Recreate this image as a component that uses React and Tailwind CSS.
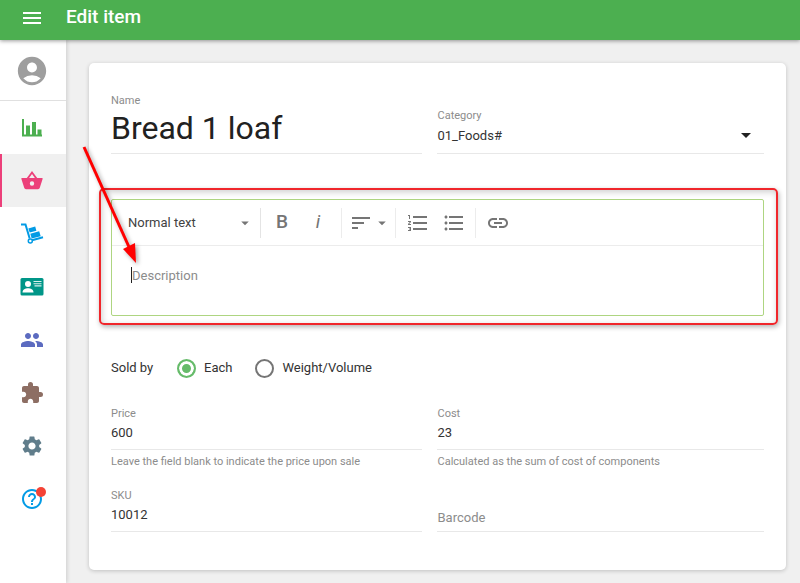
import React, { useState } from "react";
import {
  MdAccountCircle,
  MdArrowDropDown,
  MdExtension,
  MdFormatListBulleted,
  MdFormatListNumbered,
  MdHelpOutline,
  MdLink,
  MdMenu,
  MdPeople,
  MdSettings,
  MdSort,
} from "react-icons/md";

function ChartIcon() {
  return (
    <svg width="24" height="24" viewBox="0 0 24 24" fill="currentColor">
      <path d="M2 3h2v15.500h18V20.500H2z" />
      <path d="M6 9.500h4v9.500H6zM12 6h4v13h-4zM17.500 13.500h4v5.500h-4z" />
    </svg>
  );
}

function BasketIcon() {
  return (
    <svg width="24" height="24" viewBox="0 0 24 24" fill="currentColor">
      <path d="M12 2 6.800 9H2.200c-.7 0-1 .5-.8 1.100L4.200 18.800c.3.900.9 1.400 1.800 1.400h12c.9 0 1.500-.5 1.800-1.400l2.800-8.700c.2-.6-.1-1.100-.8-1.100h-4.600zm0 3 2.900 4H9.100zM12 12.300a2.200 2.200 0 1 1 0 4.400 2.200 2.200 0 0 1 0-4.400z" fillRule="evenodd" />
    </svg>
  );
}

function TrolleyIcon() {
  return (
    <svg width="24" height="24" viewBox="0 0 24 24" fill="currentColor">
      <path d="M1 2.500h4.500l4.200 14" fill="none" stroke="currentColor" strokeWidth="2" />
      <path d="m12 18.300 11-3" fill="none" stroke="currentColor" strokeWidth="2" />
      <circle cx="10.300" cy="19" r="2" fill="none" stroke="currentColor" strokeWidth="1.500" />
      <path d="m8.300 6.400 6.900-1.900 1.200 4.300-6.700 1.800zM10.300 11.700l8.900-2.400 1.500 4.900-9 2.400z" />
    </svg>
  );
}

function BadgeIcon() {
  return (
    <svg width="24" height="24" viewBox="0 0 24 24">
      <rect x="0.500" y="3" width="23" height="17.500" rx="1.500" fill="#009688" />
      <circle cx="8" cy="9" r="3" fill="#fff" />
      <path d="M2.500 17.500c0-3 3-4.200 5.500-4.200s5.500 1.200 5.500 4.200z" fill="#fff" />
      <path d="M13.500 6.500h8M13.500 8.700h8M14.500 10.900h7" stroke="#d8efec" strokeWidth="1.100" />
    </svg>
  );
}

const menu = [
  { name: "Reports", icon: <ChartIcon />, color: "text-[#4caf50]" },
  { name: "Items", icon: <BasketIcon />, color: "text-[#ec407a]", active: true },
  { name: "Inventory", icon: <TrolleyIcon />, color: "text-[#039be5]" },
  { name: "Employees", icon: <BadgeIcon />, color: "text-[#009688]" },
  { name: "Customers", icon: <MdPeople size={24} />, color: "text-[#5c6bc0]" },
  { name: "Integrations", icon: <MdExtension size={24} />, color: "text-[#8d6e63]" },
  { name: "Settings", icon: <MdSettings size={24} />, color: "text-[#607d8b]" },
  { name: "Help", icon: <MdHelpOutline size={24} />, color: "text-[#039be5]", badge: true },
];

function Sidebar() {
  return (
    <nav className="w-[66px] shrink-0 bg-white shadow-[1px_0_4px_rgba(0,0,0,0.15)]">
      <button aria-label="Account" className="flex h-[61px] w-full items-center justify-center border-b border-[#e0e0e0] pt-0.5 pr-0.5 text-[#9e9e9e]">
        <MdAccountCircle size={34} />
      </button>
      {menu.map((m) => (
        <a
          key={m.name}
          href="#"
          aria-label={m.name}
          className={`flex h-[53px] items-center justify-center border-l-2 pr-1 ${m.color} ${
            m.active ? "border-[#ec407a] bg-[#f0f0f0]" : "border-transparent"
          }`}
        >
          <span className="relative">
            {m.icon}
            {m.badge && <span className="absolute top-0 -right-0.5 size-2.5 rounded-full bg-[#f44336]" />}
          </span>
        </a>
      ))}
    </nav>
  );
}

function Field({ id, label, value, hint }) {
  const [val, setVal] = useState(value);

  return (
    <div className="min-w-0">
      <label htmlFor={id} className="block h-4 pt-px text-[11px] leading-4 text-[#8c8c8c]">
        {label}
      </label>
      <input
        id={id}
        value={val}
        onChange={(e) => setVal(e.target.value)}
        className="block h-[29px] w-full border-b border-[#e8e8e8] pb-1.5 text-[13px] text-[#333] outline-none"
      />
      {hint && <p className="pt-1 text-[11px] leading-4 text-[#8c8c8c]">{hint}</p>}
    </div>
  );
}

function Editor() {
  const [text, setText] = useState("");

  return (
    <div className="relative mt-[45px]">
      <div className="rounded-xs border border-[#aed581]">
        <div className="flex h-[46px] items-center border-b border-[#ececec] text-[#757575]">
          <div className="relative w-[149px] border-r border-[#e4e4e4]">
            <select aria-label="Text style" className="h-[30px] w-full appearance-none pl-4 text-[13px] text-[#424242] outline-none">
              <option>Normal text</option>
            </select>
            <MdArrowDropDown size={18} className="pointer-events-none absolute top-1.5 right-1.5" />
          </div>
          <div className="flex h-[30px] w-[81px] items-center border-r border-[#ececec] pl-[9px]">
            <button aria-label="Bold" className="w-6 text-[19px] font-medium">B</button>
            <button aria-label="Italic" className="ml-3 w-6 text-[19px] italic">i</button>
          </div>
          <div className="flex h-[30px] w-[54px] items-center border-r border-[#ececec] pl-[7px]">
            <button aria-label="Align" className="flex items-center">
              <MdSort size={24} />
              <MdArrowDropDown size={18} />
            </button>
          </div>
          <div className="flex h-[30px] w-20 items-center gap-3 border-r border-[#ececec] pl-2.5">
            <button aria-label="Numbered list"><MdFormatListNumbered size={24} /></button>
            <button aria-label="Bulleted list"><MdFormatListBulleted size={24} /></button>
          </div>
          <button aria-label="Link" className="ml-2.5"><MdLink size={24} /></button>
        </div>
        <div className="relative">
          <textarea
            aria-label="Description"
            placeholder="Description"
            value={text}
            onChange={(e) => setText(e.target.value)}
            className="block h-[69px] w-full resize-none px-5 pt-5 text-[13px] text-[#333] outline-none placeholder:text-[#8c8c8c]"
          />
          <span className="absolute top-[21px] left-[19px] h-4 w-px bg-[#222]" />
        </div>
      </div>

      {/* highlight */}
      <div className="pointer-events-none absolute -top-[11px] -right-[14px] -bottom-[9px] -left-[12px] rounded-[5px] border-2 border-[#f0262b] shadow-[1px_2px_5px_rgba(0,0,0,0.3),inset_1px_2px_6px_rgba(0,0,0,0.2)]" />
      <svg
        className="pointer-events-none absolute -top-[57px] -left-[31px] drop-shadow-[2px_2px_2px_rgba(0,0,0,0.35)]"
        width="64"
        height="124"
        viewBox="0 0 64 124"
      >
        <path d="M4 5 49 105" stroke="#f00" strokeWidth="3" />
        <path d="m56 121-13-14 12-6z" fill="#f00" />
      </svg>
    </div>
  );
}

function App() {
  const [name, setName] = useState("Bread 1 loaf");
  const [soldBy, setSoldBy] = useState("each");

  const radio =
    "size-[19px] appearance-none rounded-full border-2 border-[#757575] checked:border-[#66bb6a] checked:bg-[#66bb6a] checked:shadow-[inset_0_0_0_3px_#fff]";

  return (
    <div className="flex min-h-screen flex-col bg-[#f0f0f0] font-[Roboto,sans-serif]">
      <header className="z-10 flex h-10 items-center bg-[#4caf50] pl-5 text-white shadow-[0_1px_4px_rgba(0,0,0,0.4)]">
        <button aria-label="Menu" className="mt-[-5px]"><MdMenu size={24} /></button>
        <h1 className="ml-[22px] pb-1.5 text-[19px] leading-6 font-medium">Edit item</h1>
      </header>

      <div className="flex flex-1">
        <Sidebar />
        <main className="flex-1 pt-[23px] pr-[14px] pb-[13px] pl-[23px]">
          <form className="rounded-[5px] bg-white px-[22px] pt-[29px] pb-[38px] shadow-[0_1px_4px_rgba(0,0,0,0.2)]">
            <div className="grid grid-cols-[311fr_326fr] items-end gap-x-[15px]">
              <div className="min-w-0">
                <label htmlFor="name" className="block h-4 pt-px text-[11px] leading-4 text-[#8c8c8c]">Name</label>
                <input
                  id="name"
                  value={name}
                  onChange={(e) => setName(e.target.value)}
                  className="block h-[46px] w-full border-b border-[#e8e8e8] pb-1.5 text-[32px] leading-9 text-[#212121] outline-none"
                />
              </div>
              <div className="relative">
                <label htmlFor="category" className="block h-4 pt-px text-[11px] leading-4 text-[#8c8c8c]">Category</label>
                <select
                  id="category"
                  className="block h-[31px] w-full appearance-none border-b border-[#e8e8e8] pb-1 text-[13px] text-[#333] outline-none"
                >
                  <option>01_Foods#</option>
                </select>
                <MdArrowDropDown size={24} className="pointer-events-none absolute top-4 right-1.5 text-[#222]" />
              </div>
            </div>

            <Editor />

            <fieldset className="mt-[42px] flex h-5 items-center text-[13px] text-[#333]">
              <legend className="float-left w-[66px]">Sold by</legend>
              <label className="flex items-center gap-2">
                <input type="radio" name="soldBy" checked={soldBy === "each"} onChange={() => setSoldBy("each")} className={radio} />
                Each
              </label>
              <label className="ml-[23px] flex items-center gap-2">
                <input type="radio" name="soldBy" checked={soldBy === "weight"} onChange={() => setSoldBy("weight")} className={radio} />
                Weight/Volume
              </label>
            </fieldset>

            <div className="mt-[27px] grid grid-cols-[311fr_326fr] gap-x-[15px] gap-y-[17px]">
              <Field id="price" label="Price" value="600" hint="Leave the field blank to indicate the price upon sale" />
              <Field id="cost" label="Cost" value="23" hint="Calculated as the sum of cost of components" />
              <Field id="sku" label="SKU" value="10012" />
              <input
                aria-label="Barcode"
                placeholder="Barcode"
                className="h-[45px] w-full border-b border-[#e8e8e8] pt-4 text-[13px] text-[#333] outline-none placeholder:text-[#8c8c8c]"
              />
            </div>
          </form>
        </main>
      </div>
    </div>
  );
}

export default App;
